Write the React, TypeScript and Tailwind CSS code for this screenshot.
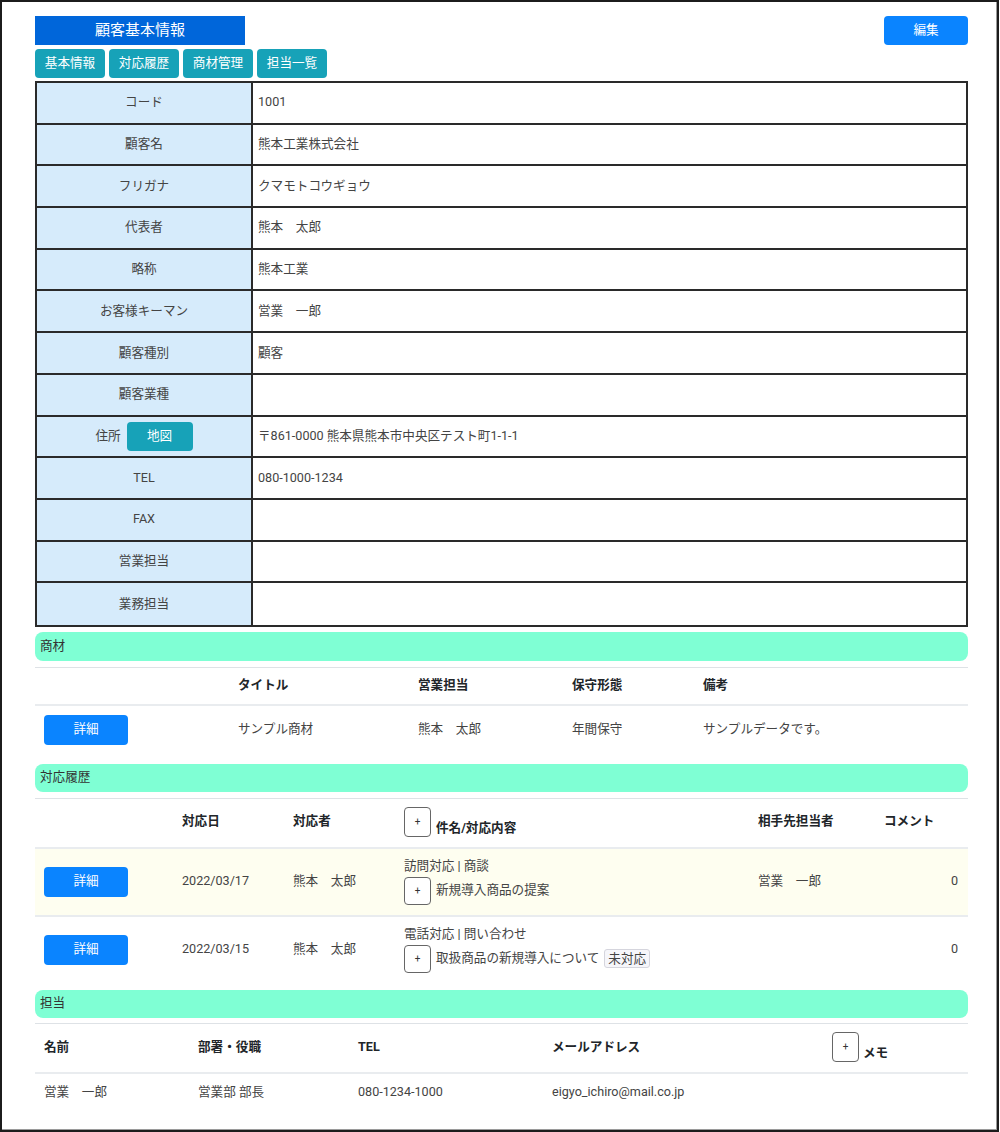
import React from 'react'

const INFO_ROWS: [string, string][] = [
  ['コード', '1001'],
  ['顧客名', '熊本工業株式会社'],
  ['フリガナ', 'クマモトコウギョウ'],
  ['代表者', '熊本　太郎'],
  ['略称', '熊本工業'],
  ['お客様キーマン', '営業　一郎'],
  ['顧客種別', '顧客'],
  ['顧客業種', ''],
  ['住所', '〒861-0000 熊本県熊本市中央区テスト町1-1-1'],
  ['TEL', '080-1000-1234'],
  ['FAX', ''],
  ['営業担当', ''],
  ['業務担当', ''],
]

const TABS = ['基本情報', '対応履歴', '商材管理', '担当一覧']

const HISTORY = [
  {
    date: '2022/03/17',
    by: '熊本　太郎',
    subject: '訪問対応 | 商談',
    title: '新規導入商品の提案',
    pending: false,
    contact: '営業　一郎',
    comments: 0,
    highlight: true,
  },
  {
    date: '2022/03/15',
    by: '熊本　太郎',
    subject: '電話対応 | 問い合わせ',
    title: '取扱商品の新規導入について',
    pending: true,
    contact: '',
    comments: 0,
    highlight: false,
  },
]

function PlusButton({ tall }: { tall?: boolean }) {
  return (
    <span
      className={
        'inline-flex w-[27px] shrink-0 items-center justify-center rounded-[4px] border border-[#666] bg-white text-[10px] text-[#333] ' +
        (tall ? 'h-[30px]' : 'h-[28px]')
      }
    >
      +
    </span>
  )
}

function DetailButton() {
  return (
    <button className="h-[30px] w-[84px] rounded-[4px] bg-[#0a84ff] text-[12.6px] text-white">
      詳細
    </button>
  )
}

function SectionHeader({ title, tall }: { title: string; tall?: boolean }) {
  return (
    <div
      className={
        'flex items-center rounded-[8px] bg-[#7fffd4] pl-[5px] text-[12.6px] text-[#333] ' +
        (tall ? 'h-[29px]' : 'h-[28px]')
      }
    >
      {title}
    </div>
  )
}

export default function App() {
  return (
    <div className="h-[1132px] w-[999px] border-2 border-[#1c1c1c] bg-white font-['Roboto','Noto_Sans_CJK_JP',sans-serif] shadow-[inset_-1px_-1px_0_#9a9a9a]">
      <div className="ml-[33px] w-[933px] pt-[14px]">
        {/* header */}
        <div className="flex items-start justify-between">
          <div className="flex h-[29px] w-[210px] items-center justify-center bg-[#0066da] text-[15px] text-white">
            顧客基本情報
          </div>
          <button className="h-[29px] w-[84px] rounded-[4px] bg-[#0a84ff] text-[12.6px] text-white">
            編集
          </button>
        </div>
        <div className="mt-[4px] flex gap-[4px]">
          {TABS.map((t) => (
            <button
              key={t}
              className="h-[29px] w-[70px] rounded-[4px] bg-[#17a2b8] text-[12.6px] text-white"
            >
              {t}
            </button>
          ))}
        </div>

        {/* basic info */}
        <div className="mt-[3px] divide-y-2 divide-[#2a2a2a] border-2 border-[#2a2a2a] text-[12.6px] text-[#444]">
          {INFO_ROWS.map(([label, value]) => (
            <div key={label} className="flex h-[41.7px]">
              <div className="flex w-[216px] shrink-0 items-center justify-center gap-[6px] border-r-2 border-[#2a2a2a] bg-[#d6ebfb]">
                {label}
                {label === '住所' && (
                  <button className="h-[29px] w-[66px] rounded-[4px] bg-[#17a2b8] text-[12.6px] text-white">
                    地図
                  </button>
                )}
              </div>
              <div className="flex flex-1 items-center pl-[5px]">{value}</div>
            </div>
          ))}
        </div>

        {/* 商材 */}
        <div className="mt-[5px]">
          <SectionHeader title="商材" tall />
        </div>
        <div className="mt-[6px] text-[12.6px]">
          <div className="grid h-[37px] grid-cols-[194px_180px_154px_131px_1fr] items-center border-t border-[#dee2e6] font-bold text-[#212529]">
            <div />
            <div className="pl-[9px]">タイトル</div>
            <div className="pl-[9px]">営業担当</div>
            <div className="pl-[9px]">保守形態</div>
            <div className="pl-[9px]">備考</div>
          </div>
          <div className="grid h-[50px] grid-cols-[194px_180px_154px_131px_1fr] items-center border-t-2 border-[#e9ecef] text-[#444]">
            <div className="pl-[9px]">
              <DetailButton />
            </div>
            <div className="pl-[9px]">サンプル商材</div>
            <div className="pl-[9px]">熊本　太郎</div>
            <div className="pl-[9px]">年間保守</div>
            <div className="pl-[9px]">サンプルデータです。</div>
          </div>
        </div>

        {/* 対応履歴 */}
        <div className="mt-[10px]">
          <SectionHeader title="対応履歴" />
        </div>
        <div className="mt-[6px] text-[12.6px]">
          <div className="grid h-[49px] grid-cols-[138px_111px_111px_354px_126px_1fr] items-end border-t border-[#dee2e6] font-bold text-[#212529]">
            <div />
            <div className="pb-[16px] pl-[9px]">対応日</div>
            <div className="pb-[16px] pl-[9px]">対応者</div>
            <div className="flex items-end gap-[5px] pb-[10px] pl-[9px]">
              <span className="font-normal">
                <PlusButton tall />
              </span>
              <span className="-mb-[1px]">件名/対応内容</span>
            </div>
            <div className="pb-[16px] pl-[9px]">相手先担当者</div>
            <div className="pb-[16px] pl-[9px]">コメント</div>
          </div>
          {HISTORY.map((h) => (
            <div
              key={h.date}
              className={
                'grid grid-cols-[138px_111px_111px_354px_126px_1fr] items-center border-t-2 border-[#e9ecef] text-[#444] ' +
                (h.highlight ? 'bg-[#fefef0]' : 'bg-white')
              }
            >
              <div className="pl-[9px]">
                <DetailButton />
              </div>
              <div className="pl-[9px]">{h.date}</div>
              <div className="pl-[9px]">{h.by}</div>
              <div className="flex flex-col gap-[2px] pt-[8px] pb-[10px] pl-[9px]">
                <div className="leading-[18px]">{h.subject}</div>
                <div className="flex items-center gap-[5px]">
                  <PlusButton />
                  <span>{h.title}</span>
                  {h.pending && (
                    <span className="rounded-[3px] border border-[#d5d5dd] bg-[#f6f6fa] px-[3px] leading-[17px]">
                      未対応
                    </span>
                  )}
                </div>
              </div>
              <div className="pl-[9px]">{h.contact}</div>
              <div className="pr-[10px] text-right">{h.comments}</div>
            </div>
          ))}
        </div>

        {/* 担当 */}
        <div className="mt-[7px]">
          <SectionHeader title="担当" />
        </div>
        <div className="mt-[5px] text-[12.6px]">
          <div className="grid h-[49px] grid-cols-[154px_160px_194px_280px_1fr] items-end border-t border-[#dee2e6] font-bold text-[#212529]">
            <div className="pb-[15px] pl-[9px]">名前</div>
            <div className="pb-[15px] pl-[9px]">部署・役職</div>
            <div className="pb-[15px] pl-[9px]">TEL</div>
            <div className="pb-[15px] pl-[9px]">メールアドレス</div>
            <div className="flex items-end gap-[4px] pb-[10px] pl-[9px]">
              <span className="font-normal">
                <PlusButton tall />
              </span>
              <span className="-mb-[1px]">メモ</span>
            </div>
          </div>
          <div className="grid h-[40px] grid-cols-[154px_160px_194px_280px_1fr] items-center border-t-2 border-[#e9ecef] text-[#444]">
            <div className="pl-[9px]">営業　一郎</div>
            <div className="pl-[9px]">営業部 部長</div>
            <div className="pl-[9px]">080-1234-1000</div>
            <div className="pl-[9px]">eigyo_ichiro@mail.co.jp</div>
            <div />
          </div>
        </div>
      </div>
    </div>
  )
}
